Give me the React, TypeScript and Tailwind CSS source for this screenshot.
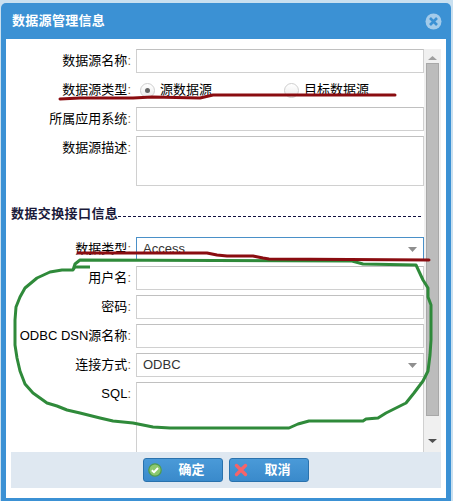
import React from "react";

const cjk = { fontFamily: '"Liberation Sans","Noto Sans CJK SC",sans-serif' };

function Label({ children }: { children: React.ReactNode }) {
  return (
    <div className="w-[125px] shrink-0 pr-[5px] text-right text-[13px] leading-[24px] text-black whitespace-nowrap">
      {children}
      <span className="text-[#8a5a2a]">:</span>
    </div>
  );
}

function Input({ className = "" }: { className?: string }) {
  return <div className={`h-[24px] flex-1 border border-[#d0d0d0] border-t-[#c0c0c0] bg-white ${className}`} />;
}

function Select({ value, active }: { value: string; active?: boolean }) {
  return (
    <div
      className={`flex h-[24px] flex-1 items-center justify-between border pl-[6px] pr-[6px] text-[13px] text-[#333] ${
        active ? "border-[#4a90c8]" : "border-[#d0d0d0] border-t-[#c0c0c0]"
      }`}
    >
      <span>{value}</span>
      <svg width="9" height="5" viewBox="0 0 9 5">
        <path d="M0 0H9L4.5 5Z" fill="#8f8f8f" />
      </svg>
    </div>
  );
}

function Row({ label, children, className = "" }: { label: string; children: React.ReactNode; className?: string }) {
  return (
    <div className={`flex ${className}`}>
      <Label>{label}</Label>
      {children}
    </div>
  );
}

function Radio({ checked }: { checked?: boolean }) {
  return (
    <span className="flex h-[15px] w-[15px] items-center justify-center rounded-full border border-[#cfcfcf] bg-gradient-to-b from-[#ffffff] to-[#ececec]">
      {checked && <span className="h-[5px] w-[5px] rounded-full bg-[#666]" />}
    </span>
  );
}

function Button({ label, icon }: { label: string; icon: React.ReactNode }) {
  return (
    <div className="relative flex h-[24px] w-[80px] items-center justify-center rounded-[3px] border border-[#2a72ad] bg-gradient-to-b from-[#4a9ad8] to-[#3a8acb] pl-[17px] text-[13px] font-bold text-white">
      <span className="absolute left-[4px] top-[4px]">{icon}</span>
      {label}
    </div>
  );
}

export default function App() {
  return (
    <div className="h-[501px] w-[453px] overflow-hidden bg-[#c9e0f0] pt-[3px]" style={cjk}>
      <div className="relative ml-[1px] h-[498px] w-[450px] rounded-t-[5px] bg-[#3b91d4] px-[5px]">
        <div className="flex h-[36px] items-center justify-between pl-[6px] pr-[4px] text-[13px] font-bold tracking-[0.3px] text-white">
          <span>数据源管理信息</span>
          <svg width="17" height="17" viewBox="0 0 17 17">
            <circle cx="8.5" cy="8.5" r="8" fill="#a3cbea" />
            <path d="M5 5L12 12M12 5L5 12" stroke="#3b91d4" strokeWidth="2.6" />
          </svg>
        </div>
        <div className="flex h-[459px] flex-col bg-white px-[5px]">
          <div className="flex h-[413px] overflow-hidden">
            <div className="w-[413px] shrink-0 pt-[10px]">
              <div className="flex flex-col gap-[5px]">
                <Row label="数据源名称"><Input /></Row>
                <Row label="数据源类型" className="h-[24px]">
                  <div className="flex flex-1 items-center pl-[4px] text-[13px] text-black">
                    <Radio checked />
                    <span className="ml-[5px]">源数据源</span>
                    <span className="ml-[72px]"><Radio /></span>
                    <span className="ml-[5px]">目标数据源</span>
                  </div>
                </Row>
                <Row label="所属应用系统"><Input /></Row>
                <Row label="数据源描述"><Input className="h-[50px]" /></Row>
              </div>
              <div className="mb-[14px] mt-[19px] flex items-end pr-[3px]">
                <span className="text-[13px] font-bold leading-[18px] tracking-[0.4px] text-[#1a1a3a]">数据交换接口信息</span>
                <span className="mb-[6px] flex-1 border-b border-dashed border-[#101040]" />
              </div>
              <div className="flex flex-col gap-[5px]">
                <Row label="数据类型"><Select value="Access" active /></Row>
                <Row label="用户名"><Input /></Row>
                <Row label="密码"><Input /></Row>
                <Row label="ODBC DSN源名称"><Input /></Row>
                <Row label="连接方式"><Select value="ODBC" /></Row>
                <Row label="SQL"><Input className="h-[90px]" /></Row>
              </div>
            </div>
            <div className="mt-[10px] flex w-[17px] shrink-0 flex-col items-center bg-[#f0f0f0]">
              <svg className="mb-[3px] mt-[7px] shrink-0" width="9" height="4" viewBox="0 0 9 4">
                <path d="M4.5 0L9 4H0Z" fill="#a0a0a0" />
              </svg>
              <div className="h-[353px] w-[13px] shrink-0 border border-[#a8a8a8] bg-[#bcbcbc]" />
              <svg className="mt-[23px] shrink-0" width="9" height="4" viewBox="0 0 9 4">
                <path d="M0 0H9L4.5 4Z" fill="#505050" />
              </svg>
            </div>
          </div>
          <div className="flex h-[36px] items-center justify-center gap-[6px] bg-[#dfe8f1]">
            <Button
              label="确定"
              icon={
                <svg width="14" height="14" viewBox="0 0 14 14">
                  <circle cx="7" cy="7" r="6.2" fill="#8cc86f" stroke="#4f9a4f" strokeWidth="1.3" />
                  <path d="M3.8 7.2L6 9.2L10 5" fill="none" stroke="#fff" strokeWidth="1.9" />
                </svg>
              }
            />
            <Button
              label="取消"
              icon={
                <svg width="14" height="14" viewBox="0 0 14 14">
                  <path d="M2.5 2.5L11.5 11.5M11.5 2.5L2.5 11.5" stroke="#f5646a" strokeWidth="3.4" strokeLinecap="round" />
                </svg>
              }
            />
          </div>
        </div>
      </div>
      <svg className="absolute left-0 top-0" width="453" height="501" viewBox="0 0 453 501" fill="none">
        <path
          d="M90 267L75 267L73 270L62 270L50 272L37 278L25 288L20 297L16 307L15 320L15 345L17 358L20 371L25 384L33 393L47 403L57 406L67 410L80 413L100 418L113 421L133 423L153 427L170 428L289 428L298 424L309 421L363 421L366 419L378 418L386 413L406 403L414 393L423 381L428 371L430 355L431 340L431 305L428 297L428 288L423 280L416 265L363 264L352 261L80 260L75 264L73 270"
          stroke="#2f8a3a"
          strokeWidth="3"
          strokeLinejoin="round"
        />
        <path d="M60 99L80 98L133 98L152 97L200 98L213 95L395 95" stroke="#8a0c10" strokeWidth="3" strokeLinecap="round" strokeLinejoin="round" />
        <path d="M78 253L207 253L217 255L227 256L253 256L263 258L269 259L429 260" stroke="#8a0c10" strokeWidth="3" strokeLinecap="round" strokeLinejoin="round" />
      </svg>
    </div>
  );
}
